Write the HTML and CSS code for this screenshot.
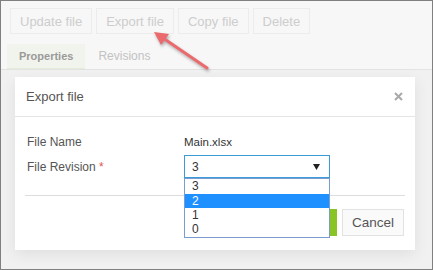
FILE: index.html
```html
<!DOCTYPE html>
<html lang="en">
<head>
  <meta charset="UTF-8">
  <title>Export file</title>
  <link rel="stylesheet" href="styles.css">
</head>
<body>

  <!-- Toolbar -->
  <div class="toolbar">
    <button class="tool">Update file</button>
    <button class="tool">Export file</button>
    <button class="tool">Copy file</button>
    <button class="tool">Delete</button>
  </div>

  <!-- Tabs -->
  <div class="tabs">
    <div class="tab active">Properties</div>
    <div class="tab">Revisions</div>
  </div>
  <div class="content"></div>

  <!-- Export dialog -->
  <div class="backdrop">
    <div class="modal">
      <div class="modal-header">
        <span class="modal-title">Export file</span>
        <svg class="close" width="9" height="9" viewBox="0 0 9 9">
          <path d="M1 1 L8 8 M8 1 L1 8" stroke="#a9a9a9" stroke-width="2"/>
        </svg>
      </div>
      <div class="modal-body">
        <div class="row">
          <div class="label">File Name</div>
          <div class="value">Main.xlsx</div>
        </div>
        <div class="row">
          <div class="label">File Revision <span class="req">*</span></div>
          <div class="select-wrap">
            <div class="select">
              <span>3</span>
              <svg width="7" height="6" viewBox="0 0 7 6"><path d="M0 0 H7 L3.5 6 Z" fill="#222"/></svg>
            </div>
            <div class="options">
              <div class="option">3</div>
              <div class="option selected">2</div>
              <div class="option">1</div>
              <div class="option">0</div>
            </div>
          </div>
        </div>
      </div>
      <div class="modal-footer">
        <button class="btn btn-green">Export</button>
        <button class="btn">Cancel</button>
      </div>
    </div>
  </div>

  <!-- Annotation arrow -->
  <svg class="arrow" width="433" height="270" viewBox="0 0 433 270">
    <path d="M207 68 L163 38" stroke="#ea6a6e" stroke-width="3" stroke-linecap="round"/>
    <path d="M154 32 L169 34 L161 45 Z" fill="#ea6a6e"/>
  </svg>

</body>
</html>
```

FILE: styles.css
```css
html, body { margin: 0; }
body { position: relative; width: 433px; height: 270px; box-sizing: border-box; border: 1px solid #808080; background: #f7f7f7; font-family: "Liberation Sans", Arial, sans-serif; overflow: hidden; }

.toolbar { display: flex; gap: 4px; padding: 7px 0 0 9px; }
.tool { height: 26px; padding: 0 9px; border: 1px solid #ececec; background: #f7f7f7; color: #cdcdcd; font-family: inherit; font-size: 13px; }

.tabs { display: flex; margin-top: 10px; padding-left: 6px; height: 25px; border-bottom: 1px solid #e3e3e3; }
.tab { padding: 0 13px; line-height: 25px; font-size: 12px; color: #c2c2c2; }
.tab.active { background: #f1f4ec; color: #9a9a9a; font-weight: bold; font-size: 11px; padding: 0 12px; border-bottom: 1px solid #e2ecd6; }
.content { height: 200px; background: #f1f1f1; }

.backdrop { position: absolute; top: 0; left: 0; right: 0; bottom: 0; padding: 76px 0 0 14px; }
.modal { width: 400px; height: 173px; background: #fff; box-shadow: 0 4px 14px rgba(0, 0, 0, 0.08); }

.modal-header { display: flex; align-items: center; justify-content: space-between; height: 39px; padding: 0 12px 0 11px; border-bottom: 1px solid #e5e5e5; }
.modal-title { font-size: 13px; color: #555; }

.modal-body { padding: 13px 10px 17px; }
.row { display: flex; align-items: center; }
.row:first-child { height: 24px; }
.row + .row { margin-top: 1px; }
.label { width: 157px; padding-left: 2px; font-size: 12px; color: #555; }
.req { color: #e25555; }
.value { font-size: 11.5px; color: #333; }

.select-wrap { position: relative; }
.select { display: flex; align-items: center; justify-content: space-between; width: 146px; height: 23px; box-sizing: border-box; padding: 0 9px 0 7px; border: 1px solid #3c9bd6; font-size: 12px; color: #333; }
.options { position: absolute; top: 100%; left: 0; width: 146px; box-sizing: border-box; padding: 0 0 1px; border: 1px solid #7a9cd0; background: #fff; z-index: 2; }
.option { height: 14px; line-height: 14px; padding-left: 7px; font-size: 12px; color: #333; }
.option:first-child { height: 15px; }
.option.selected { background: #1e90ff; color: #fff; }

.modal-footer { display: flex; justify-content: flex-end; gap: 5px; margin: 0 10px; padding: 13px 1px 0 0; border-top: 1px solid #dddddd; }
.btn { height: 27px; padding: 0 9px; border: 1px solid #e2e2e2; background: #fafafa; color: #555; font-family: inherit; font-size: 13.5px; }
.btn-green { background: #88c425; border-color: #88c425; color: #fff; }

.arrow { position: absolute; top: -1px; left: -1px; filter: drop-shadow(1px 2px 1.5px rgba(0, 0, 0, 0.3)); }
```
